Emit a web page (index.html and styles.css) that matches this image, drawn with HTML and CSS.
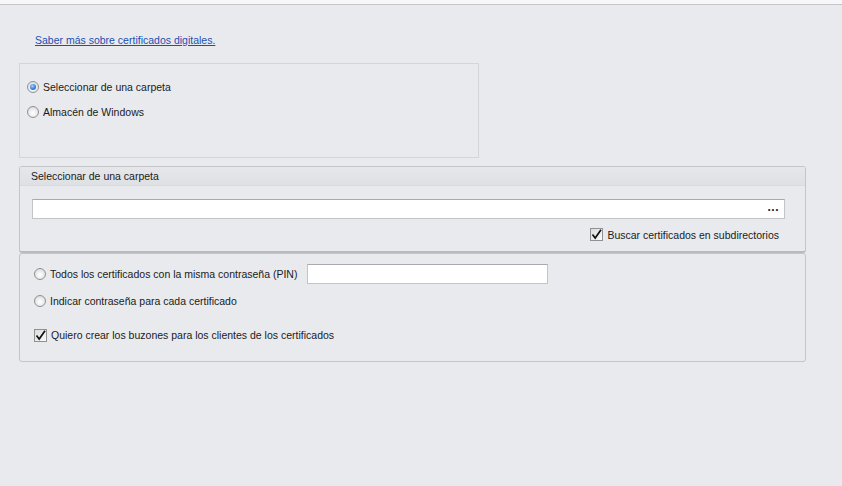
FILE: index.html
```html
<!DOCTYPE html>
<html lang="es">
<head>
<meta charset="utf-8">
<title>Certificados</title>
<link rel="stylesheet" href="styles.css">
</head>
<body>
<div class="topbar"></div>
<div class="page">
  <a class="link" href="#">Saber más sobre certificados digitales.</a>

  <div class="box source">
    <label class="row"><span class="radio checked"></span>Seleccionar de una carpeta</label>
    <label class="row"><span class="radio"></span>Almacén de Windows</label>
  </div>

  <div class="group folder">
    <div class="group-head">Seleccionar de una carpeta</div>
    <div class="group-body">
      <div class="path">
        <span class="dots">...</span>
      </div>
      <div class="sub">
        <label class="row"><span class="check"><svg viewBox="0 0 13 13" width="13" height="13"><path d="M2.5 6.5 L5.2 10 L11 1.8" fill="none" stroke="#111" stroke-width="1.7"/></svg></span>Buscar certificados en subdirectorios</label>
      </div>
    </div>
  </div>

  <div class="group options">
    <div class="row pin-row"><span class="radio"></span>Todos los certificados con la misma contraseña (PIN)<span class="pin"></span></div>
    <label class="row"><span class="radio"></span>Indicar contraseña para cada certificado</label>
    <label class="row mail"><span class="check"><svg viewBox="0 0 13 13" width="13" height="13"><path d="M2.5 6.5 L5.2 10 L11 1.8" fill="none" stroke="#111" stroke-width="1.7"/></svg></span>Quiero crear los buzones para los clientes de los certificados</label>
  </div>
</div>
</body>
</html>
```

FILE: styles.css
```css
html, body {
  margin: 0;
  padding: 0;
  background: #e9eaee;
  font-family: "Liberation Sans", Arial, sans-serif;
  font-size: 10.5px;
  color: #1a1a1a;
}
.topbar {
  height: 4px;
  background: #f7f7f9;
  border-bottom: 1px solid #c4c5c9;
}
.page {
  padding: 0 37px 0 19px;
}
.link {
  display: inline-block;
  margin: 29px 0 0 16px;
  color: #1c4fb0;
  font-size: 10.5px;
  line-height: 13px;
  text-decoration: underline;
}
.box {
  margin-top: 16px;
  width: 460px;
  height: 95px;
  border: 1px solid #d4d5d9;
  padding: 10px 0 0 7px;
  box-sizing: border-box;
}
.row {
  display: flex;
  align-items: center;
  height: 25px;
  white-space: nowrap;
}
.radio {
  width: 12px;
  height: 12px;
  border-radius: 50%;
  box-sizing: border-box;
  border: 1px solid #8f9194;
  background: radial-gradient(circle at 50% 60%, #ffffff 0%, #f0f0f0 40%, #cfd0d2 100%);
  margin-right: 4px;
  flex: none;
  position: relative;
}
.radio.checked::after {
  content: "";
  position: absolute;
  left: 2px;
  top: 2px;
  width: 6px;
  height: 6px;
  border-radius: 50%;
  background: radial-gradient(circle at 40% 35%, #a8d3ff 0%, #3b7fd8 55%, #1c4f9e 100%);
}
.check {
  width: 13px;
  height: 13px;
  box-sizing: border-box;
  border: 1px solid #8f9194;
  background: linear-gradient(135deg, #dcdcdc, #fafafa);
  margin-right: 4px;
  flex: none;
  position: relative;
}
.check svg {
  position: absolute;
  left: -1px;
  top: -1px;
}
.group {
  width: 787px;
  border: 1px solid #c4c5c9;
  border-radius: 3px;
  box-sizing: border-box;
}
.folder {
  margin-top: 8px;
  height: 87px;
  border-bottom: 2px solid #b9babe;
}
.group-head {
  height: 18px;
  line-height: 18px;
  padding-left: 11px;
  background: linear-gradient(#e6e7eb, #dfe0e4);
  border-bottom: 1px solid #d9dade;
}
.group-body {
  padding: 13px 20px 0 12px;
}
.path {
  height: 20px;
  background: #fff;
  border: 1px solid #c3c4c8;
  border-top-color: #a9aab0;
  box-sizing: border-box;
  display: flex;
  justify-content: flex-end;
  align-items: center;
  padding-right: 5px;
}
.dots {
  font-weight: bold;
  font-size: 12px;
  line-height: 12px;
  letter-spacing: 0.5px;
  color: #1a1a2a;
  margin-top: -5px;
}
.sub {
  display: flex;
  justify-content: flex-end;
  padding-right: 6px;
  margin-top: 3px;
}
.options {
  margin-top: 0;
  height: 109px;
  padding: 8px 0 0 14px;
}
.pin-row {
  height: 24px;
}
.pin {
  display: inline-block;
  width: 241px;
  height: 20px;
  margin-left: 10px;
  background: #fff;
  border: 1px solid #c3c4c8;
  border-top-color: #a9aab0;
  box-sizing: border-box;
}
.options .row:nth-child(2) {
  height: 30px;
}
.mail {
  margin-top: 6px;
  height: 26px;
}
```
